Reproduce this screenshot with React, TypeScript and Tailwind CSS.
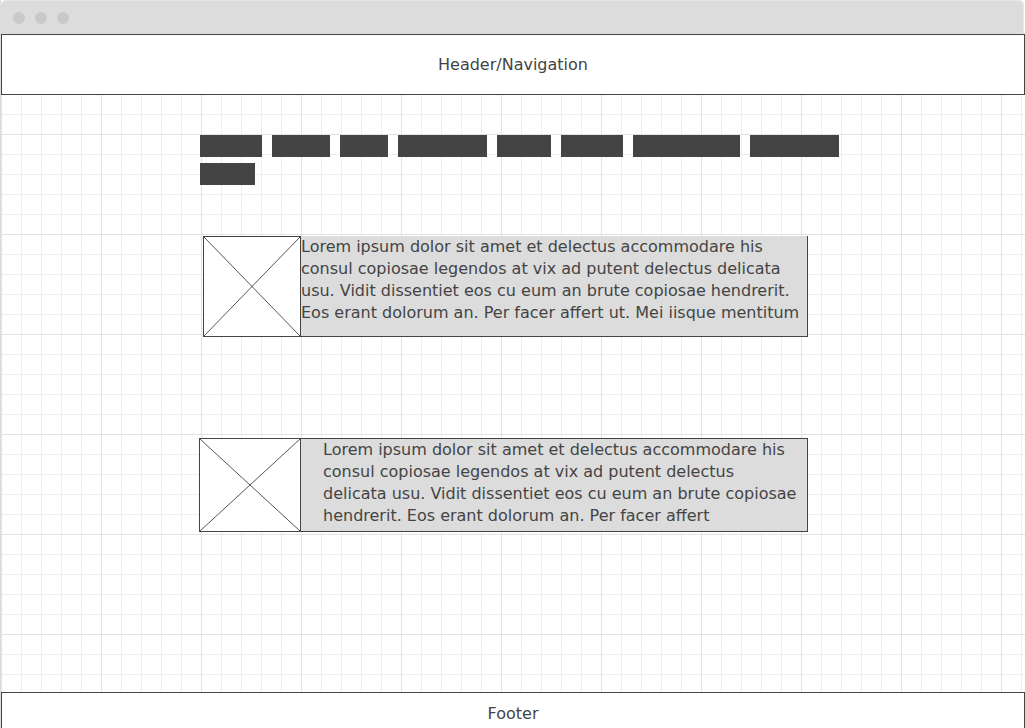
const navItems = [62, 58, 48, 89, 54, 62, 107, 89, 55];

const lorem1 =
  "Lorem ipsum dolor sit amet et delectus accommodare his consul copiosae legendos at vix ad putent delectus delicata usu. Vidit dissentiet eos cu eum an brute copiosae hendrerit. Eos erant dolorum an. Per facer affert ut. Mei iisque mentitum";

const lorem2 =
  "Lorem ipsum dolor sit amet et delectus accommodare his consul copiosae legendos at vix ad putent delectus delicata usu. Vidit dissentiet eos cu eum an brute copiosae hendrerit. Eos erant dolorum an. Per facer affert";

function Placeholder({ className }: { className: string }) {
  return (
    <div className={`relative shrink-0 border-r border-[#444] bg-white ${className}`}>
      <svg className="absolute inset-0 h-full w-full" viewBox="0 0 100 100" preserveAspectRatio="none">
        <line x1="0" y1="0" x2="100" y2="100" stroke="#555" strokeWidth="1" vectorEffect="non-scaling-stroke" />
        <line x1="100" y1="0" x2="0" y2="100" stroke="#555" strokeWidth="1" vectorEffect="non-scaling-stroke" />
      </svg>
    </div>
  );
}

export default function App() {
  return (
    <div className="h-[728px] w-[1025px] overflow-hidden border-l border-[#dcdcdc] bg-white font-['DejaVu_Sans',sans-serif] text-[16px] text-[#444]">
      {/* window chrome */}
      <div className="mr-px flex h-[34px] items-center gap-[10px] rounded-t-[5px] border-t border-r border-[#e6e6e6] bg-[#dcdcdc] pl-[12px]">
        <span className="h-[12px] w-[12px] rounded-full bg-[#c9c9c9]" />
        <span className="h-[12px] w-[12px] rounded-full bg-[#c9c9c9]" />
        <span className="h-[12px] w-[12px] rounded-full bg-[#c9c9c9]" />
      </div>

      <div className="bg-white bg-[linear-gradient(to_right,#e2e2e2_1px,transparent_1px),linear-gradient(to_bottom,#e2e2e2_1px,transparent_1px),linear-gradient(to_right,#efefef_1px,transparent_1px),linear-gradient(to_bottom,#efefef_1px,transparent_1px)] bg-[length:100px_100px,100px_100px,20px_20px,20px_20px]">
        <header className="flex h-[61px] items-center justify-center border border-[#444] bg-white">
          Header/Navigation
        </header>

        <main className="flow-root h-[597px] pt-[40px]">
          <nav className="ml-[199px] flex w-[650px] flex-wrap gap-x-[10px] gap-y-[6px]">
            {navItems.map((w, i) => (
              <span key={i} className="h-[22px] bg-[#444]" style={{ width: w }} />
            ))}
          </nav>

          <div className="ml-[202px] mt-[51px] flex h-[101px] w-[605px] border border-[#444]">
            <Placeholder className="w-[97px]" />
            <p className="-mt-px flex-1 bg-[#dcdcdc] leading-[22px]">{lorem1}</p>
          </div>

          <div className="ml-[198px] mt-[101px] flex h-[94px] w-[609px] border border-[#444]">
            <Placeholder className="w-[101px]" />
            <p className="flex-1 bg-[#dcdcdc] pl-[22px] pr-[8px] leading-[22px]">{lorem2}</p>
          </div>
        </main>

        <footer className="flex h-[42px] items-center justify-center border border-b-0 border-[#444] bg-white">
          Footer
        </footer>
      </div>
    </div>
  );
}
